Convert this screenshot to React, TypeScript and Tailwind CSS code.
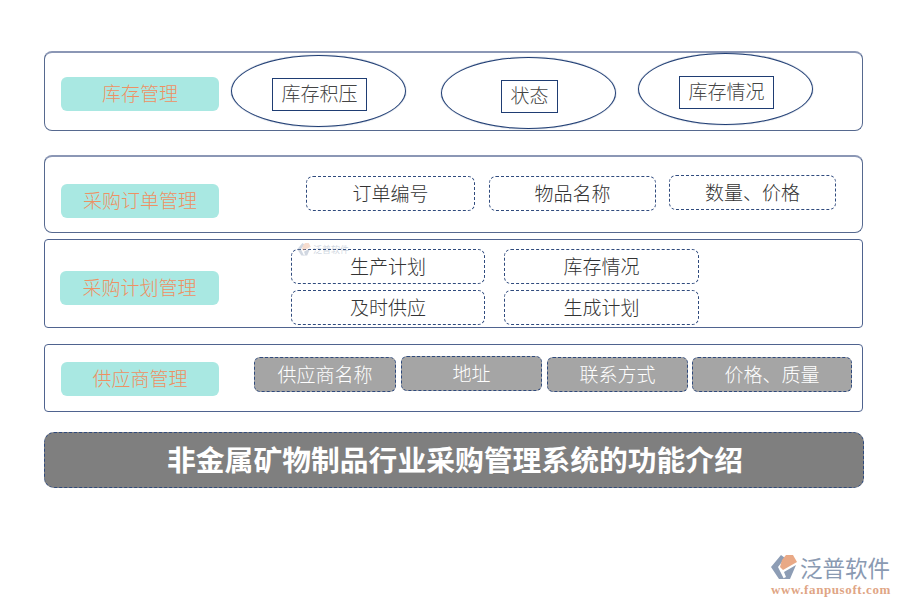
const font = "[font-family:'Noto_Sans_CJK_SC','Liberation_Serif',serif]";

function Label({ text, className }: { text: string; className: string }) {
  return (
    <div className={`flex h-[34px] items-center justify-center rounded-[6px] bg-[#a9e8e2] pb-[1px] text-[19px] font-light text-[#ee9063] ${className}`}>
      {text}
    </div>
  );
}

function Oval({ text, className, boxWidth }: { text: string; className: string; boxWidth: string }) {
  return (
    <div className={`flex h-[72px] w-[175px] shrink-0 items-center justify-center rounded-[50%] border border-[#1f3d73] pl-[2px] pt-[7px] shadow-[0_0_1px_#2f4a7d] ${className}`}>
      <div className={`flex h-[33px] items-center justify-center border border-[#1f3d73] pb-[2px] text-[19px] font-light text-[#444] ${boxWidth}`}>
        {text}
      </div>
    </div>
  );
}

function Chip({ text, className }: { text: string; className: string }) {
  return (
    <div className={`flex h-[35px] shrink-0 items-center justify-center rounded-[7px] border border-dashed border-[#2f4a7d] pb-[1px] text-[19px] font-light text-[#333] ${className}`}>
      {text}
    </div>
  );
}

function GrayChip({ text, className }: { text: string; className: string }) {
  return (
    <div className={`flex h-[35px] shrink-0 items-center justify-center rounded-[6px] border border-dashed border-[#2f4a7d] bg-[#a5a5a5] pb-[1px] text-[19px] font-light text-white ${className}`}>
      {text}
    </div>
  );
}

function LogoMark({ className }: { className: string }) {
  return (
    <svg viewBox="0 0 26 25" className={className}>
      <path d="M10 0 L0 12 L8 24 L13 24 L7 12 L14 3 Z" fill="#8d9db5" />
      <path d="M11 5 L15 0 L22 0 L26 7 L12 15 L9 12 Z" fill="#e9a986" />
      <path d="M13 17 L25 10 L19 24 L11 24 L15 22 Z" fill="#8d9db5" />
    </svg>
  );
}

export default function App() {
  return (
    <div className={`relative h-[600px] w-[900px] overflow-hidden bg-white px-[44px] pt-[51px] ${font}`}>
      {/* 库存管理 */}
      <div className="flex h-[80px] w-[819px] items-start rounded-[8px] border border-t-2 border-[#56698f] border-t-[#8b97b5]">
        <Label text="库存管理" className="ml-[16px] mt-[24px] w-[158px] shrink-0" />
        <Oval text="库存积压" className="ml-[12px] mt-[2px]" boxWidth="w-[95px]" />
        <Oval text="状态" className="ml-[35px] mt-[4px]" boxWidth="w-[57px]" />
        <Oval text="库存情况" className="ml-[22px] mt-[0px]" boxWidth="w-[95px]" />
      </div>

      {/* 采购订单管理 */}
      <div className="mt-[24px] flex h-[78px] w-[819px] items-start rounded-[8px] border border-t-2 border-[#56698f] border-t-[#8b97b5]">
        <Label text="采购订单管理" className="ml-[16px] mt-[27px] w-[158px] shrink-0" />
        <Chip text="订单编号" className="ml-[87px] mt-[19px] w-[169px]" />
        <Chip text="物品名称" className="ml-[14px] mt-[19px] w-[167px]" />
        <Chip text="数量、价格" className="ml-[13px] mt-[18px] w-[167px]" />
      </div>

      {/* 采购计划管理 */}
      <div className="mt-[6px] flex h-[89px] w-[819px] items-start rounded-[4px] border border-[#4f638f]">
        <Label text="采购计划管理" className="ml-[15px] mt-[31px] w-[159px] shrink-0" />
        <div className="ml-[72px] mt-[9px] grid grid-cols-[194px_195px] gap-x-[19px] gap-y-[6px]">
          <Chip text="生产计划" className="w-full" />
          <Chip text="库存情况" className="w-full" />
          <Chip text="及时供应" className="w-full" />
          <Chip text="生成计划" className="w-full" />
        </div>
      </div>

      {/* 供应商管理 */}
      <div className="mt-[16px] flex h-[68px] w-[819px] items-start rounded-[4px] border border-[#4f638f]">
        <Label text="供应商管理" className="ml-[16px] mt-[17px] w-[158px] shrink-0" />
        <GrayChip text="供应商名称" className="ml-[35px] mt-[12px] w-[142px]" />
        <GrayChip text="地址" className="ml-[5px] mt-[11px] w-[141px]" />
        <GrayChip text="联系方式" className="ml-[5px] mt-[12px] w-[141px]" />
        <GrayChip text="价格、质量" className="ml-[4px] mt-[12px] w-[160px]" />
      </div>

      {/* 标题 */}
      <div className="mt-[20px] flex h-[56px] w-[820px] items-center justify-center rounded-[10px] border border-dashed border-[#2f4a7d] bg-[#7f7f7f] pb-[3px] pl-[2px] text-[28.8px] font-bold text-white">
        非金属矿物制品行业采购管理系统的功能介绍
      </div>

      {/* 水印 */}
      <div className="absolute left-[297px] top-[243px] flex items-center gap-[2px] opacity-40">
        <LogoMark className="h-[13px] w-[14px]" />
        <span className="text-[9px] leading-none text-[#8d9db5]">泛普软件</span>
      </div>

      {/* 右下角标志 */}
      <div className="absolute left-[771px] top-[555px] w-[122px]">
        <div className="flex h-[24px] items-center">
          <LogoMark className="h-[25px] w-[26px] shrink-0" />
          <span className="ml-[3px] text-[22.5px] leading-[24px] text-[#8a9ab2]">泛普软件</span>
        </div>
        <div className="mt-[4px] whitespace-nowrap font-['Liberation_Serif',serif] text-[13px] font-bold leading-[14px] tracking-[0.6px] text-[#e0a585]">
          www.fanpusoft.com
        </div>
      </div>
    </div>
  );
}
